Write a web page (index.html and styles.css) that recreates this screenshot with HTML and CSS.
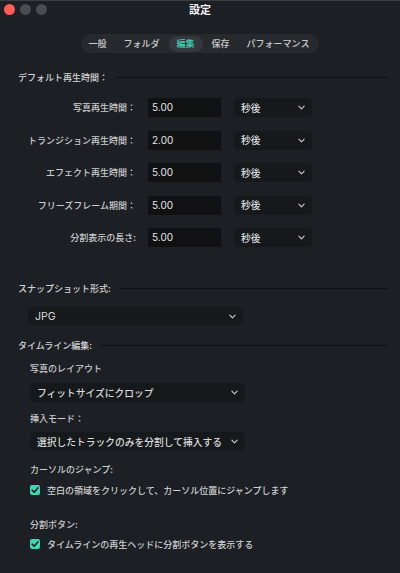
FILE: index.html
```html
<!DOCTYPE html>
<html lang="ja">
<head>
<meta charset="utf-8">
<title>設定</title>
<link rel="stylesheet" href="styles.css">
</head>
<body>
<div class="window">
  <div class="titlebar">
    <div class="lights">
      <span class="light red"></span>
      <span class="light grey"></span>
      <span class="light grey"></span>
    </div>
    <div class="title">設定</div>
    <div></div>
  </div>

  <div class="tabs-wrap">
    <div class="tabs">
      <span class="tab">一般</span>
      <span class="tab">フォルダ</span>
      <span class="tab active">編集</span>
      <span class="tab">保存</span>
      <span class="tab">パフォーマンス</span>
    </div>
  </div>

  <div class="section-head s1"><span>デフォルト再生時間：</span><i class="rule"></i></div>

  <div class="rows">
    <div class="row">
      <span class="row-label">写真再生時間：</span>
      <span class="input">5.00</span>
      <span class="select small"><span>秒後</span><svg class="chev" viewBox="0 0 8 5"><path d="M1 1 L4 4 L7 1"/></svg></span>
    </div>
    <div class="row">
      <span class="row-label">トランジション再生時間：</span>
      <span class="input">2.00</span>
      <span class="select small"><span>秒後</span><svg class="chev" viewBox="0 0 8 5"><path d="M1 1 L4 4 L7 1"/></svg></span>
    </div>
    <div class="row">
      <span class="row-label">エフェクト再生時間：</span>
      <span class="input">5.00</span>
      <span class="select small"><span>秒後</span><svg class="chev" viewBox="0 0 8 5"><path d="M1 1 L4 4 L7 1"/></svg></span>
    </div>
    <div class="row">
      <span class="row-label">フリーズフレーム期間：</span>
      <span class="input">5.00</span>
      <span class="select small"><span>秒後</span><svg class="chev" viewBox="0 0 8 5"><path d="M1 1 L4 4 L7 1"/></svg></span>
    </div>
    <div class="row">
      <span class="row-label">分割表示の長さ:</span>
      <span class="input">5.00</span>
      <span class="select small"><span>秒後</span><svg class="chev" viewBox="0 0 8 5"><path d="M1 1 L4 4 L7 1"/></svg></span>
    </div>
  </div>

  <div class="section-head s2"><span>スナップショット形式:</span><i class="rule"></i></div>
  <div class="select wide jpg"><span>JPG</span><svg class="chev" viewBox="0 0 8 5"><path d="M1 1 L4 4 L7 1"/></svg></div>

  <div class="section-head s3"><span>タイムライン編集:</span><i class="rule"></i></div>

  <div class="sub-label l1">写真のレイアウト</div>
  <div class="select wide ind sel1"><span>フィットサイズにクロップ</span><svg class="chev" viewBox="0 0 8 5"><path d="M1 1 L4 4 L7 1"/></svg></div>

  <div class="sub-label l2">挿入モード：</div>
  <div class="select wide ind sel2"><span>選択したトラックのみを分割して挿入する</span><svg class="chev" viewBox="0 0 8 5"><path d="M1 1 L4 4 L7 1"/></svg></div>

  <div class="sub-label l3">カーソルのジャンプ:</div>
  <div class="check-row c1">
    <span class="checkbox"><svg viewBox="0 0 10 10"><path d="M2.2 5.2 L4.2 7.2 L7.9 2.9"/></svg></span>
    <span>空白の領域をクリックして、カーソル位置にジャンプします</span>
  </div>

  <div class="sub-label l4">分割ボタン:</div>
  <div class="check-row c2">
    <span class="checkbox"><svg viewBox="0 0 10 10"><path d="M2.2 5.2 L4.2 7.2 L7.9 2.9"/></svg></span>
    <span>タイムラインの再生ヘッドに分割ボタンを表示する</span>
  </div>
</div>
</body>
</html>
```

FILE: styles.css
```css
* { box-sizing: border-box; }

html, body {
  margin: 0;
  padding: 0;
  background: #1c1f23;
}

body {
  width: 400px;
  height: 573px;
  overflow: hidden;
  font-family: Inter, "Noto Sans CJK JP", sans-serif;
  color: #cfd0d1;
  font-size: 9px;
}

.window {
  width: 400px;
  height: 573px;
  border-top: 1px solid #3a3d41;
  background: #1c1f23;
}

.titlebar {
  height: 21px;
  display: grid;
  grid-template-columns: 1fr auto 1fr;
  align-items: center;
}

.lights {
  display: flex;
  gap: 5px;
  padding-left: 4px;
  margin-top: -4px;
}

.light {
  width: 11px;
  height: 11px;
  border-radius: 50%;
  display: block;
}

.light.red { background: #fe5c55; }
.light.grey { background: #494c50; }

.title {
  font-family: "Noto Sans CJK JP", sans-serif;
  font-weight: 700;
  font-size: 11px;
  color: #f2f2f2;
  margin-top: -5px;
}

.tabs-wrap {
  display: flex;
  justify-content: center;
  margin-top: 12px;
}

.tabs {
  display: flex;
  align-items: center;
  gap: 1px;
  height: 19px;
  padding: 0 2px 0 0;
  border-radius: 10px;
  background: #26292d;
}

.tab {
  font-family: "Noto Sans CJK JP", sans-serif;
  font-weight: 500;
  font-size: 9px;
  line-height: 16px;
  height: 16px;
  padding: 0 8px;
  color: #c8c9ca;
  border-radius: 8px;
  white-space: nowrap;
}

.tab.active {
  background: #34383c;
  color: #3fd4b5;
}

.section-head {
  display: flex;
  align-items: center;
  height: 14px;
  padding: 0 12px 0 18px;
  font-family: "Noto Sans CJK JP", sans-serif;
  font-weight: 500;
  font-size: 9px;
  color: #d2d3d4;
  white-space: nowrap;
}

.section-head .rule {
  flex: 1;
  height: 1px;
  background: #0d0f11;
  margin-left: 8px;
}

.s1 { margin-top: 17px; }
.s2 { margin-top: 34px; }
.s3 { margin-top: 13px; }

.rows {
  margin-top: 14px;
  display: flex;
  flex-direction: column;
  gap: 13.5px;
}

.row {
  display: flex;
  align-items: center;
  height: 19px;
}

.row-label {
  width: 136px;
  text-align: right;
  font-family: "Noto Sans CJK JP", sans-serif;
  font-weight: 500;
  font-size: 9px;
  color: #cbcccd;
  white-space: nowrap;
}

.input {
  width: 73px;
  height: 19px;
  margin-left: 12px;
  background: #0f1113;
  padding-left: 4px;
  line-height: 19px;
  font-size: 10px;
  color: #e6e6e6;
}

.select {
  display: flex;
  align-items: center;
  justify-content: space-between;
  height: 19px;
  padding: 0 7px;
  border-radius: 5px;
  background: #16191c;
  font-family: "Noto Sans CJK JP", sans-serif;
  font-weight: 500;
  font-size: 9.75px;
  color: #d8d9da;
  white-space: nowrap;
}

.select.small {
  width: 78px;
  margin-left: 13px;
}

.select.wide {
  width: 215px;
}

.jpg {
  margin-left: 28px;
  margin-top: 12px;
  font-family: Inter, sans-serif;
  font-weight: 400;
  font-size: 10.5px;
  height: 18px;
}

.ind { margin-left: 30px; width: 214px; }
.sel1 { margin-top: 7px; }
.sel2 { margin-top: 6px; }

.chev {
  width: 7px;
  height: 5px;
  flex: none;
}

.chev path {
  fill: none;
  stroke: #c9cacb;
  stroke-width: 1.3;
  stroke-linecap: round;
  stroke-linejoin: round;
}

.sub-label {
  height: 14px;
  line-height: 14px;
  margin-left: 30px;
  font-family: "Noto Sans CJK JP", sans-serif;
  font-weight: 500;
  font-size: 9px;
  color: #cbcccd;
}

.l1 { margin-top: 10px; }
.l2 { margin-top: 10px; }
.l3 { margin-top: 12px; }
.l4 { margin-top: 21px; }

.check-row {
  display: flex;
  align-items: center;
  gap: 7px;
  height: 14px;
  margin-left: 30px;
  font-family: "Noto Sans CJK JP", sans-serif;
  font-weight: 500;
  font-size: 9px;
  color: #d0d1d2;
  white-space: nowrap;
}

.c1 { margin-top: 6px; }
.c2 { margin-top: 5px; }

.checkbox {
  width: 10px;
  height: 10px;
  border-radius: 2px;
  background: #3fd6b6;
  display: flex;
  flex: none;
}

.checkbox svg {
  width: 10px;
  height: 10px;
}

.checkbox path {
  fill: none;
  stroke: #15181b;
  stroke-width: 1.6;
  stroke-linecap: round;
  stroke-linejoin: round;
}
```
